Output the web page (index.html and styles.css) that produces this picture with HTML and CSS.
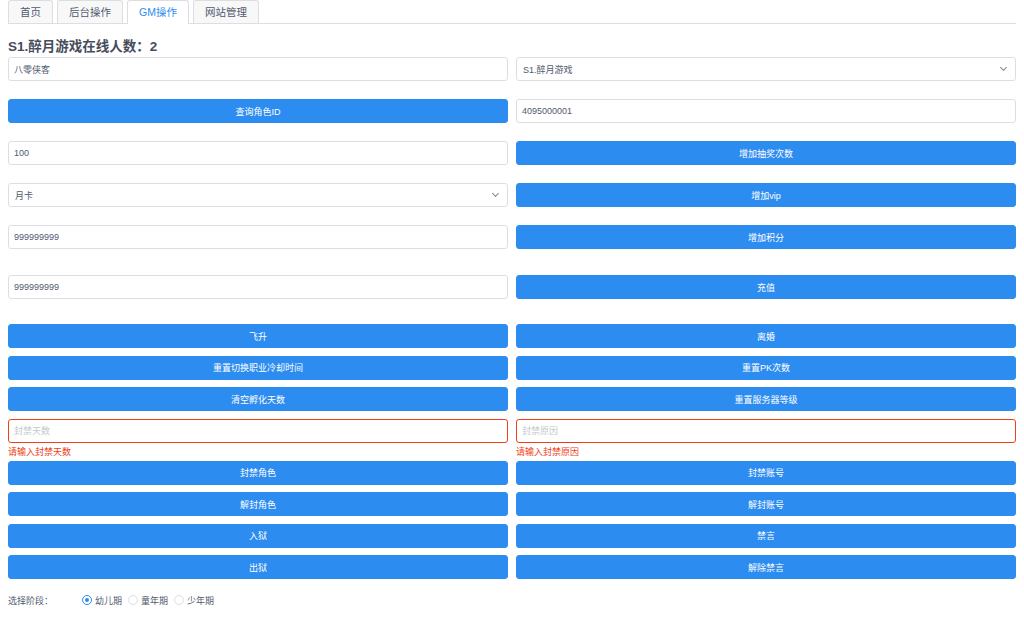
FILE: index.html
```html
<!DOCTYPE html>
<html lang="zh-CN">
<head>
  <meta charset="UTF-8">
  <title>GM操作</title>
  <link rel="stylesheet" href="styles.css">
</head>
<body>
<div class="page">
  <div class="tabs">
    <div class="tab">首页</div>
    <div class="tab">后台操作</div>
    <div class="tab active">GM操作</div>
    <div class="tab">网站管理</div>
  </div>

  <h3 class="title">S1.醉月游戏在线人数：2</h3>

  <div class="row">
    <input class="ipt" type="text" value="八零侠客">
    <div class="select"><span>S1.醉月游戏</span><i class="arrow"></i></div>
  </div>
  <div class="row">
    <button class="btn">查询角色ID</button>
    <input class="ipt" type="text" value="4095000001">
  </div>
  <div class="row">
    <input class="ipt" type="text" value="100">
    <button class="btn">增加抽奖次数</button>
  </div>
  <div class="row">
    <div class="select"><span>月卡</span><i class="arrow"></i></div>
    <button class="btn">增加vip</button>
  </div>
  <div class="row wide">
    <input class="ipt" type="text" value="999999999">
    <button class="btn">增加积分</button>
  </div>
  <div class="row wide2">
    <input class="ipt" type="text" value="999999999">
    <button class="btn">充值</button>
  </div>

  <div class="row tight">
    <button class="btn">飞升</button>
    <button class="btn">离婚</button>
  </div>
  <div class="row tight">
    <button class="btn">重置切换职业冷却时间</button>
    <button class="btn">重置PK次数</button>
  </div>
  <div class="row tight">
    <button class="btn">清空孵化天数</button>
    <button class="btn">重置服务器等级</button>
  </div>
  <div class="row err-row">
    <div>
      <input class="ipt error" type="text" placeholder="封禁天数">
      <div class="err-msg">请输入封禁天数</div>
    </div>
    <div>
      <input class="ipt error" type="text" placeholder="封禁原因">
      <div class="err-msg">请输入封禁原因</div>
    </div>
  </div>
  <div class="row tight">
    <button class="btn">封禁角色</button>
    <button class="btn">封禁账号</button>
  </div>
  <div class="row tight">
    <button class="btn">解封角色</button>
    <button class="btn">解封账号</button>
  </div>
  <div class="row tight">
    <button class="btn">入狱</button>
    <button class="btn">禁言</button>
  </div>
  <div class="row tight">
    <button class="btn">出狱</button>
    <button class="btn">解除禁言</button>
  </div>

  <div class="radio-line">
    <span class="radio-label">选择阶段：</span>
    <label class="radio checked"><i></i>幼儿期</label>
    <label class="radio"><i></i>童年期</label>
    <label class="radio"><i></i>少年期</label>
  </div>
</div>
</body>
</html>
```

FILE: styles.css
```css
body {
  margin: 0;
  background: #fff;
  font-family: "Liberation Sans", "Noto Sans CJK SC", sans-serif;
  color: #515a6e;
}
.page {
  padding: 0 8px;
}
.tabs {
  display: flex;
  height: 23px;
  border-bottom: 1px solid #dcdee2;
}
.tab {
  height: 23px;
  line-height: 23px;
  padding: 0 11px;
  margin-right: 4px;
  font-size: 10.5px;
  color: #515a6e;
  background: #f8f8f9;
  border: 1px solid #dcdee2;
  border-bottom: 0;
  border-radius: 3px 3px 0 0;
  box-sizing: border-box;
}
.tab.active {
  background: #fff;
  color: #2d8cf0;
  height: 24px;
}
.title {
  margin: 0;
  height: 33px;
  line-height: 45px;
  font-size: 13.5px;
  font-weight: bold;
  color: #464c5b;
}
.row {
  display: grid;
  grid-template-columns: 1fr 1fr;
  gap: 8px;
  margin-bottom: 18px;
}
.row.wide {
  margin-bottom: 26px;
}
.row.wide2 {
  margin-bottom: 25px;
}
.row.tight {
  margin-bottom: 7.5px;
}
.row.err-row {
  margin-bottom: 0;
}
.ipt, .select, .btn {
  display: block;
  width: 100%;
  height: 24px;
  box-sizing: border-box;
  border-radius: 3px;
  font-family: inherit;
  font-size: 9px;
}
.ipt {
  border: 1px solid #dcdee2;
  padding: 0 5px;
  color: #515a6e;
  outline: none;
}
.ipt::placeholder {
  color: #c5c8ce;
}
.ipt.error {
  border-color: #ed4014;
}
.err-msg {
  height: 18px;
  line-height: 18px;
  font-size: 9px;
  color: #ed4014;
}
.select {
  display: flex;
  align-items: center;
  justify-content: space-between;
  border: 1px solid #dcdee2;
  padding: 0 9px 0 6px;
  color: #515a6e;
}
.arrow {
  width: 4px;
  height: 4px;
  border-right: 1px solid #808695;
  border-bottom: 1px solid #808695;
  transform: rotate(45deg);
  margin-top: -3px;
}
.btn {
  border: 1px solid #2d8cf0;
  background: #2d8cf0;
  color: #fff;
  padding: 0;
}
.radio-line {
  display: flex;
  align-items: center;
  height: 20px;
  margin-top: 11px;
  font-size: 9px;
}
.radio-label {
  width: 74px;
}
.radio {
  display: flex;
  align-items: center;
  margin-right: 6px;
}
.radio i {
  width: 10px;
  height: 10px;
  border: 1px solid #dcdee2;
  border-radius: 50%;
  box-sizing: border-box;
  margin-right: 3px;
  position: relative;
}
.radio.checked i {
  border-color: #2d8cf0;
}
.radio.checked i::after {
  content: "";
  position: absolute;
  left: 2px;
  top: 2px;
  width: 4px;
  height: 4px;
  border-radius: 50%;
  background: #2d8cf0;
}
```
